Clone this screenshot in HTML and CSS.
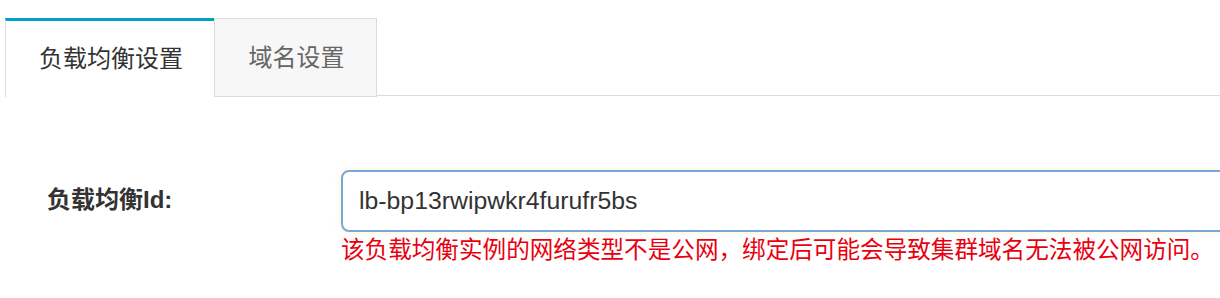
FILE: index.html
```html
<!DOCTYPE html>
<html lang="zh-CN">
<head>
<meta charset="utf-8">
<title>负载均衡设置</title>
<link rel="stylesheet" href="styles.css">
</head>
<body>
<div class="page">
  <div class="tabs">
    <div class="tab tab-active">负载均衡设置</div>
    <div class="tab tab-second">域名设置</div>
    <div class="tab-rest"></div>
  </div>
  <div class="form-row">
    <label class="form-label">负载均衡Id:</label>
    <div class="form-field">
      <div class="input">lb-bp13rwipwkr4furufr5bs</div>
      <div class="error">该负载均衡实例的网络类型不是公网，绑定后可能会导致集群域名无法被公网访问。</div>
    </div>
  </div>
</div>
</body>
</html>
```

FILE: styles.css
```css
html, body {
  margin: 0;
  padding: 0;
  background: #fff;
  overflow: hidden;
}
body {
  font-family: "Liberation Sans", "Noto Sans CJK SC", sans-serif;
  color: #333;
}
.page {
  width: 1220px;
  height: 298px;
  overflow: hidden;
}
.tabs {
  display: flex;
  align-items: flex-end;
  margin-top: 18px;
  padding-left: 5px;
}
.tab {
  box-sizing: border-box;
  flex-shrink: 0;
  height: 79px;
  display: flex;
  align-items: center;
  justify-content: center;
  white-space: nowrap;
  padding-bottom: 5px;
  font-size: 24px;
  font-family: "Noto Sans CJK SC", sans-serif;
  color: #666;
  background: #f7f7f7;
  border: 1px solid #dcdcdc;
}
.tab-active {
  width: 209px;
  background: #fff;
  color: #333;
  border: none;
  border-top: 3px solid #00a2ca;
  border-left: 1px solid #dcdcdc;
  padding-left: 2px;
}
.tab-second {
  width: 163px;
  height: 79px;
  padding-left: 2px;
}
.tab-rest {
  flex: 1;
  height: 1px;
  margin-bottom: 1px;
  background: #dcdcdc;
}
.form-row {
  display: flex;
  align-items: flex-start;
  margin-top: 73px;
}
.form-label {
  flex-shrink: 0;
  width: 341px;
  padding-left: 47px;
  box-sizing: border-box;
  font-family: "Liberation Sans", "Noto Sans CJK SC", sans-serif;
  font-weight: bold;
  font-size: 24px;
  line-height: 60px;
  color: #333;
}
.form-field {
  flex-shrink: 0;
  display: flex;
  flex-direction: column;
}
.input {
  box-sizing: border-box;
  width: 1000px;
  height: 62px;
  border: 2px solid #7ba7d6;
  border-radius: 8px;
  padding-left: 16px;
  font-size: 24.8px;
  line-height: 58px;
  color: #333;
  font-family: "Liberation Sans", sans-serif;
  box-shadow: 0 0 6px rgba(250, 235, 180, 0.5);
}
.error {
  margin-top: 2px;
  font-size: 23.6px;
  line-height: 28px;
  color: #e8000f;
  font-family: "Noto Sans CJK SC", sans-serif;
  white-space: nowrap;
}
```
